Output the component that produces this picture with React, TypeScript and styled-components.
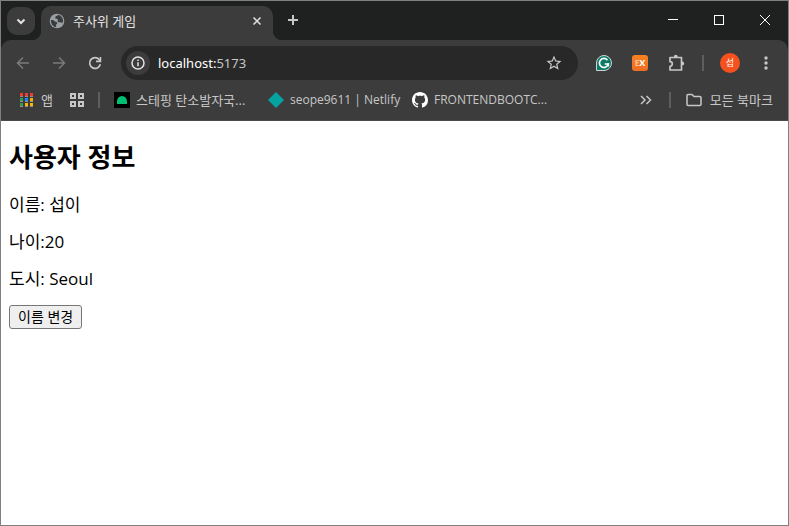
import React, { useState } from 'react';
import styled, { createGlobalStyle } from 'styled-components';

const uiFont = '"Open Sans", "Noto Sans CJK KR", sans-serif';

const GlobalStyle = createGlobalStyle`
  * { box-sizing: border-box; }
  body { margin: 0; background: #fff; }
  svg { display: block; flex: none; }
`;

const BrowserWindow = styled.div`
  display: flex;
  flex-direction: column;
  min-height: 100vh;
  border: 1px solid #808080;
  background: #1f2120;
  font-family: ${uiFont};
`;

const IconButton = styled.button<{ $width?: number; $height?: number; $color?: string }>`
  display: flex;
  flex: none;
  align-items: center;
  justify-content: center;
  width: ${(p) => p.$width ?? 36}px;
  height: ${(p) => p.$height ?? 34}px;
  padding: 0;
  border: 0;
  background: transparent;
  color: ${(p) => p.$color ?? '#c7c7c7'};
`;

const TitleBar = styled.header`
  display: flex;
  align-items: flex-end;
  height: 39px;
  padding-left: 6px;
`;

const TabSearch = styled(IconButton)`
  align-self: center;
  margin-right: 6px;
  border-radius: 10px;
  background: #3c3c3c;
`;

const Tab = styled.div`
  position: relative;
  display: flex;
  align-items: center;
  flex: 0 1 232px;
  height: 34px;
  padding: 0 6px 5px 8px;
  border-radius: 10px 10px 0 0;
  background: #3c3c3c;
  color: #e3e3e3;

  &::before,
  &::after {
    content: '';
    position: absolute;
    bottom: 0;
    width: 10px;
    height: 10px;
  }
  &::before {
    right: 100%;
    background: radial-gradient(circle at 0 0, transparent 10px, #3c3c3c 11px);
  }
  &::after {
    left: 100%;
    background: radial-gradient(circle at 100% 0, transparent 10px, #3c3c3c 11px);
  }
`;

const TabTitle = styled.span`
  flex: 1;
  margin-left: 8px;
  font-size: 13px;
  line-height: 18px;
  white-space: nowrap;
`;

const WindowControls = styled.div`
  display: flex;
  align-self: stretch;
  margin-left: auto;
`;

const Toolbar = styled.nav`
  display: flex;
  align-items: center;
  height: 46px;
  padding: 0 4px;
  border-radius: 10px 10px 0 0;
  background: #3c3c3c;
`;

const AddressBar = styled.div`
  display: flex;
  flex: 1;
  align-items: center;
  height: 34px;
  margin: 0 8px;
  padding: 0 6px 0 5px;
  border-radius: 17px;
  background: #282828;
`;

const SiteInfo = styled(IconButton)`
  border-radius: 50%;
  background: #3c3c3c;
`;

const Address = styled.a`
  flex: 1;
  margin-left: 8px;
  color: #c7c7c7;
  font: 13px/20px "Noto Sans", sans-serif;
  text-decoration: none;
`;

const Host = styled.span`
  color: #fff;
`;

const Divider = styled.span<{ $space: number }>`
  flex: none;
  width: 2px;
  height: 16px;
  margin: 0 ${(p) => p.$space}px;
  background: #5e5e5e;
`;

const Avatar = styled.span`
  display: flex;
  align-items: center;
  justify-content: center;
  width: 20px;
  height: 20px;
  border-radius: 50%;
  background: #f4511e;
  color: #fff;
  font: 9px/12px ${uiFont};
`;

const ExtensionBadge = styled.span`
  display: flex;
  align-items: center;
  justify-content: center;
  width: 16px;
  height: 16px;
  border-radius: 3px;
  background: linear-gradient(#f58220, #f06c24);
  color: #fff;
  font: bold 9px/12px "Open Sans", sans-serif;
`;

const BadgeInitial = styled.span`
  color: #fbc49b;
  font-size: 8px;
`;

const BookmarksBar = styled.nav`
  display: flex;
  align-items: center;
  height: 35px;
  padding: 0 15px 6px 19px;
  border-bottom: 1px solid #4b4b4b;
  background: #3c3c3c;
`;

const Bookmark = styled.a<{ $basis?: number; $gap?: number; $latin?: boolean }>`
  display: flex;
  flex: 0 0 ${(p) => (p.$basis ? `${p.$basis}px` : 'auto')};
  align-items: center;
  gap: ${(p) => p.$gap ?? 6}px;
  color: #c7c7c7;
  font-size: ${(p) => (p.$latin ? 12 : 13)}px;
  line-height: 18px;
  text-decoration: none;
  white-space: nowrap;
`;

const BookmarkOverflow = styled(IconButton)`
  margin-left: auto;
`;

const Page = styled.main`
  flex: 1;
  padding: 20px 8px 8px;
  background: #fff;
  color: #000;
`;

const PageTitle = styled.h2`
  margin: 0 0 20px;
  font-size: 26px;
  line-height: 33px;
`;

const InfoLine = styled.p`
  margin: 0 0 16px;
  font-size: 17px;
  line-height: 21px;
`;

const ChangeButton = styled.button`
  display: block;
  height: 24px;
  margin: 0;
  padding: 0 8px;
  border: 1px solid #767676;
  border-radius: 3px;
  background: #efefef;
  color: #000;
  font: 14px/20px ${uiFont};
`;

type StrokeProps = { size: number; d: string; weight?: number; crisp?: boolean };

const StrokeIcon = ({ size, d, weight = 2, crisp }: StrokeProps) => (
  <svg
    width={size}
    height={size}
    viewBox={`0 0 ${size} ${size}`}
    fill="none"
    stroke="currentColor"
    strokeWidth={weight}
    shapeRendering={crisp ? 'crispEdges' : undefined}
    aria-hidden
  >
    <path d={d} />
  </svg>
);

const GlobeIcon = () => (
  <svg width="16" height="16" viewBox="0 0 16 16" aria-hidden>
    <circle cx="8" cy="8" r="7.3" fill="#9aa0a6" />
    <path
      d="M9.300 1.800C8.700 3 6 3 6.200 4.700c.1 1.300 2 .6 2.600 1.700.4.900-.6 1.500 0 2.400.7 1 2.200.2 3.200.8.8.5 1.300.2 1.900-.4A6.200 6.200 0 0 0 9.300 1.800zM1.900 7.100c1.500-.2 3 .3 3.900 1.100.8.7 2.400.6 2.500 1.700.1 1.100-1.200 1-1.300 2.100-.1.800.3 1.200.2 2.200A6.200 6.200 0 0 1 1.900 7.100z"
      fill="#3c3c3c"
    />
  </svg>
);

const ReloadIcon = () => (
  <svg width="14" height="14" viewBox="0 0 14 14" fill="none" stroke="currentColor" strokeWidth="1.700" aria-hidden>
    <path d="M12.300 8.300A5.400 5.400 0 1 1 11.300 3.700L12.500 5.200" />
    <path d="M12.400 1v4.400H8" />
  </svg>
);

const InfoIcon = () => (
  <svg width="14" height="14" viewBox="0 0 14 14" fill="none" stroke="#e3e3e3" aria-hidden>
    <circle cx="7" cy="7" r="6" strokeWidth="1.500" />
    <path d="M7 6.300v4M7 3.500v1.500" strokeWidth="1.500" />
  </svg>
);

const StarIcon = () => (
  <svg width="18" height="18" viewBox="0 0 24 24" fill="currentColor" aria-hidden>
    <path d="M22 9.240l-7.190-.620L12 2 9.190 8.630 2 9.240l5.460 4.730L5.820 21 12 17.270 18.180 21l-1.630-7.030L22 9.240zM12 15.400l-3.760 2.270 1-4.280-3.320-2.880 4.380-.380L12 6.100l1.710 4.040 4.380.380-3.320 2.880 1 4.280L12 15.400z" />
  </svg>
);

const GrammarIcon = () => (
  <svg width="16" height="16" viewBox="0 0 16 16" fill="none" aria-hidden>
    <path d="M.5 15.500V8A7.500 7.500 0 1 1 8 15.500z" fill="#0d7a68" stroke="#c9d6d2" />
    <path d="M11.400 5.100A4.500 4.500 0 1 0 12.300 9H8.700M12.300 8v3.600" stroke="#fff" strokeWidth="1.700" />
  </svg>
);

const PuzzleIcon = () => (
  <svg width="18" height="18" viewBox="0 0 18 18" aria-hidden>
    <path
      d="M3 3.500H14.500V16H3V12.300a2.300 2.300 0 0 0 0-4.600z"
      fill="none"
      stroke="currentColor"
      strokeWidth="1.700"
      strokeLinejoin="round"
    />
    <path d="M6.900 3.500V2.700a1.900 1.900 0 0 1 3.800 0v.8zM14.500 7.500h.8a1.900 1.900 0 0 1 0 3.800h-.8z" fill="currentColor" />
  </svg>
);

const MenuIcon = () => (
  <svg width="4" height="16" viewBox="0 0 4 16" fill="currentColor" aria-hidden>
    <circle cx="2" cy="3" r="1.700" />
    <circle cx="2" cy="8" r="1.700" />
    <circle cx="2" cy="13" r="1.700" />
  </svg>
);

const appColors = [
  ['#f03a2e', '#f03a2e', '#f03a2e'],
  ['#2f9e4f', '#2684fc', '#f9ab00'],
  ['#2f9e4f', '#fbb503', '#fbb503'],
];

const AppsIcon = () => (
  <svg width="13" height="14" viewBox="0 0 13 14" shapeRendering="crispEdges" aria-hidden>
    {appColors.map((row, y) =>
      row.map((color, x) => (
        <g key={`${x}-${y}`}>
          <rect x={x * 5} y={y * 5} width="3" height="3" fill={color} />
          <rect x={x * 5} y={y * 5 + 3} width="3" height="1" fill="#8f8f8f" />
        </g>
      )),
    )}
  </svg>
);

const TabGroupsIcon = () => (
  <StrokeIcon size={14} crisp d="M1 1h4v4h-4zM9 1h4v4h-4zM1 9h4v4h-4zM9 9h4v4h-4z" />
);

const SteppingIcon = () => (
  <svg width="16" height="16" viewBox="0 0 16 16" aria-hidden>
    <path d="M0 0h16v16H0z" fill="#000" />
    <path d="M3 12V9.500a5 5.500 0 0 1 10 0V12z" fill="#00bf73" />
  </svg>
);

const NetlifyIcon = () => (
  <svg width="16" height="16" viewBox="0 0 16 16" aria-hidden>
    <path d="M8 0l8 8-8 8-8-8z" fill="#05a3a0" />
  </svg>
);

const GithubIcon = () => (
  <svg width="16" height="16" viewBox="0 0 16 16" fill="#fff" aria-hidden>
    <path d="M8 0C3.580 0 0 3.580 0 8c0 3.540 2.290 6.530 5.470 7.590.4.070.55-.17.55-.38 0-.19-.01-.82-.01-1.490-2.010.37-2.530-.49-2.690-.94-.09-.23-.48-.94-.82-1.130-.28-.15-.68-.52-.01-.53.63-.01 1.080.58 1.230.82.72 1.210 1.870.87 2.330.66.07-.52.28-.87.51-1.070-1.780-.2-3.640-.89-3.640-3.950 0-.87.31-1.590.82-2.150-.08-.2-.36-1.020.08-2.120 0 0 .67-.21 2.200.82.64-.18 1.320-.27 2-.27s1.360.09 2 .27c1.530-1.040 2.200-.82 2.200-.82.44 1.100.16 1.920.08 2.120.51.56.82 1.270.82 2.150 0 3.070-1.870 3.750-3.650 3.950.29.25.54.73.54 1.480 0 1.070-.01 1.930-.01 2.200 0 .21.15.46.55.38A8.010 8.010 0 0 0 16 8c0-4.420-3.580-8-8-8z" />
  </svg>
);

const FolderIcon = () => (
  <StrokeIcon size={16} weight={1.5} d="M2 2.500h4l2 2h6q1 0 1 1v7q0 1-1 1H2q-1 0-1-1v-9q0-1 1-1z" />
);

export default function App() {
  const [name, setName] = useState('섭이');

  return (
    <BrowserWindow>
      <GlobalStyle />
      <TitleBar>
        <TabSearch $width={28} $height={28} $color="#e3e3e3" aria-label="탭 검색">
          <StrokeIcon size={10} weight={2} d="M1.500 3.500L5 7l3.500-3.500" />
        </TabSearch>
        <Tab>
          <GlobeIcon />
          <TabTitle>주사위 게임</TabTitle>
          <IconButton $width={20} $height={20} $color="#e3e3e3" aria-label="탭 닫기">
            <StrokeIcon size={10} weight={1.5} d="M1.500 1.500l7 7M8.500 1.500l-7 7" />
          </IconButton>
        </Tab>
        <IconButton $width={40} $height={40} aria-label="새 탭">
          <StrokeIcon size={12} weight={2} crisp d="M6 1v10M1 6h10" />
        </IconButton>
        <WindowControls>
          <IconButton $width={46} $height={38} $color="#fff" aria-label="최소화">
            <StrokeIcon size={10} weight={1} crisp d="M0 4.500h10" />
          </IconButton>
          <IconButton $width={46} $height={38} $color="#fff" aria-label="최대화">
            <StrokeIcon size={10} weight={1} crisp d="M.5.5h9v9h-9z" />
          </IconButton>
          <IconButton $width={46} $height={38} $color="#fff" aria-label="닫기">
            <StrokeIcon size={10} weight={1} d="M0 0l10 10M10 0L0 10" />
          </IconButton>
        </WindowControls>
      </TitleBar>

      <Toolbar>
        <IconButton $color="#7b7b7b" aria-label="뒤로">
          <StrokeIcon size={14} weight={1.5} d="M13 7H2M7 1.500L1.500 7 7 12.500" />
        </IconButton>
        <IconButton $color="#7b7b7b" aria-label="앞으로">
          <StrokeIcon size={14} weight={1.5} d="M1 7h11M7 1.500L12.500 7 7 12.500" />
        </IconButton>
        <IconButton aria-label="새로고침">
          <ReloadIcon />
        </IconButton>
        <AddressBar>
          <SiteInfo $width={24} $height={24} aria-label="사이트 정보">
            <InfoIcon />
          </SiteInfo>
          <Address href="#address">
            <Host>localhost:</Host>5173
          </Address>
          <IconButton aria-label="북마크 추가">
            <StarIcon />
          </IconButton>
        </AddressBar>
        <IconButton aria-label="Grammarly">
          <GrammarIcon />
        </IconButton>
        <IconButton aria-label="EX">
          <ExtensionBadge>
            <BadgeInitial>E</BadgeInitial>X
          </ExtensionBadge>
        </IconButton>
        <IconButton aria-label="확장 프로그램">
          <PuzzleIcon />
        </IconButton>
        <Divider $space={8} />
        <IconButton aria-label="프로필">
          <Avatar>섭</Avatar>
        </IconButton>
        <IconButton aria-label="메뉴">
          <MenuIcon />
        </IconButton>
      </Toolbar>

      <BookmarksBar>
        <Bookmark href="#apps" $basis={50} $gap={8}>
          <AppsIcon />앱
        </Bookmark>
        <IconButton $width={14} $height={28} aria-label="탭 그룹">
          <TabGroupsIcon />
        </IconButton>
        <Divider $space={14} />
        <Bookmark href="#stepping" $basis={154}>
          <SteppingIcon />
          스테핑 탄소발자국...
        </Bookmark>
        <Bookmark href="#netlify" $basis={144} $latin>
          <NetlifyIcon />
          seope9611 | Netlify
        </Bookmark>
        <Bookmark href="#bootcamp" $latin>
          <GithubIcon />
          FRONTENDBOOTC...
        </Bookmark>
        <BookmarkOverflow $width={16} $height={28} aria-label="북마크 더보기">
          <StrokeIcon size={12} weight={1.5} d="M1 2l4 4-4 4M6.500 2l4 4-4 4" />
        </BookmarkOverflow>
        <Divider $space={15} />
        <Bookmark href="#all" $gap={8}>
          <FolderIcon />
          모든 북마크
        </Bookmark>
      </BookmarksBar>

      <Page>
        <PageTitle>사용자 정보</PageTitle>
        <InfoLine>이름: {name}</InfoLine>
        <InfoLine>나이:20</InfoLine>
        <InfoLine>도시: Seoul</InfoLine>
        <ChangeButton onClick={() => setName('민수')}>이름 변경</ChangeButton>
      </Page>
    </BrowserWindow>
  );
}
